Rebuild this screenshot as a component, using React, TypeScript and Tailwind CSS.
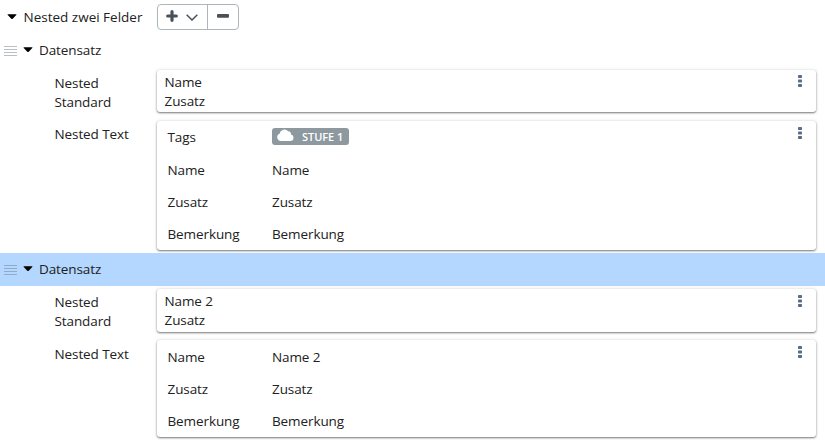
import type { ReactNode } from "react";

type Field = { label: string; value: ReactNode };

function Caret() {
  return (
    <svg className="h-[6px] w-[10px] shrink-0" viewBox="0 0 10 6" fill="#000">
      <path d="M1 0.3h8q.9 0 .3.8L5.7 4.8q-.7.6-1.4 0L.7 1.1Q.1.3 1 .3z" />
    </svg>
  );
}

function Grip() {
  return (
    <span className="flex w-[13px] flex-col gap-[2px]">
      <span className="h-px bg-[#708090]/50" />
      <span className="h-px bg-[#708090]/50" />
      <span className="h-px bg-[#708090]/50" />
      <span className="h-px bg-[#708090]/50" />
    </span>
  );
}

function MenuDots({ className }: { className: string }) {
  return (
    <svg className={`mr-[14px] h-[12px] w-[4px] shrink-0 ${className}`} viewBox="0 0 4 12" fill="#596d84">
      <rect x="0" y="0" width="4" height="3" rx="0.7" />
      <rect x="0" y="4.5" width="4" height="3" rx="0.7" />
      <rect x="0" y="9" width="4" height="3" rx="0.7" />
    </svg>
  );
}

function Card({ className, dots = "mt-[6px]", children }: { className: string; dots?: string; children: ReactNode }) {
  return (
    <div
      className={`flex w-[659px] shrink-0 items-start justify-between rounded-[3px] bg-white shadow-[0_1px_2px_rgba(0,0,0,0.5),0_0_4px_rgba(0,0,0,0.1)] ${className}`}
    >
      {children}
      <MenuDots className={dots} />
    </div>
  );
}

function Row({ label, className, labelPad = "pt-1", children }: { label: string; className: string; labelPad?: string; children: ReactNode }) {
  return (
    <div className={`flex items-start ${className}`}>
      <div className={`w-[102.5px] shrink-0 ${labelPad}`}>
        <div className="w-20">{label}</div>
      </div>
      {children}
    </div>
  );
}

function Fields({ items }: { items: Field[] }) {
  return (
    <div className="pt-px pl-[10.5px]">
      {items.map((item) => (
        <div key={item.label} className="flex h-8 items-center">
          <span className="w-[104.5px]">{item.label}</span>
          <span>{item.value}</span>
        </div>
      ))}
    </div>
  );
}

function Tag() {
  return (
    <span className="flex h-[17px] w-[77px] items-center rounded-[3px] bg-[#8d999f] pl-[5px] text-[11px] leading-[17px] font-semibold text-white">
      <svg className="mb-[3px] h-[12px] w-[17px]" viewBox="0 0 17 12" fill="#fff">
        <path d="M3.8 12A3.8 3.8 0 0 1 2.5 4.7 5 5 0 0 1 11.2 2.3 2.8 2.8 0 0 1 14 5.5 3.3 3.3 0 0 1 13.5 12z" />
      </svg>
      <span className="ml-[8px] tracking-[-0.05px]">STUFE 1</span>
    </span>
  );
}

function RecordHeader({ selected }: { selected?: boolean }) {
  return (
    <div className={`flex h-[33px] items-center pl-1 ${selected ? "bg-[#b3d7ff]" : ""}`}>
      <Grip />
      <span className="mr-[6px] mb-px ml-[6px] flex">
        <Caret />
      </span>
      <span>Datensatz</span>
    </div>
  );
}

export default function App() {
  return (
    <main className="h-[444px] w-[825px] overflow-hidden bg-white font-['Open_Sans','Noto_Sans',sans-serif] text-[13.5px] leading-[19px] tracking-[-0.1px] text-[#212121]">
      <header className="flex h-[34px] items-center pl-[7px]">
        <Caret />
        <span className="ml-[6.5px] w-[133.5px] tracking-normal">Nested zwei Felder</span>
        <div className="flex h-[26px] w-[82px] rounded-[4px] border border-[#adb5bd]">
          <button className="flex w-[50px] items-center border-r border-[#adb5bd] pl-[8px]">
            <svg className="mb-[3px] h-[12px] w-[12px]" viewBox="0 0 12 12" fill="none" stroke="#495057" strokeWidth="3.2" strokeLinecap="round">
              <path d="M6 1.7v8.6M1.7 6h8.6" />
            </svg>
            <svg className="ml-[8px] h-[7px] w-[12px]" viewBox="0 0 12 7" fill="none" stroke="#495057" strokeWidth="1.5">
              <path d="M.7.8 6 6 11.3.8" />
            </svg>
          </button>
          <button className="flex flex-1 items-center justify-center">
            <svg className="mb-[3px] h-[4px] w-[12px]" viewBox="0 0 12 4" fill="#495057">
              <rect width="12" height="3.7" rx="1" />
            </svg>
          </button>
        </div>
      </header>

      <RecordHeader />
      <section className="h-[186px] pt-[3px] pl-[54.5px]">
        <Row label="Nested Standard" className="h-[51px]">
          <Card className="h-[42px]" dots="mt-[5px]">
            <div className="pt-[3px] pl-[7.5px]">
              <p>Name</p>
              <p>Zusatz</p>
            </div>
          </Card>
        </Row>
        <Row label="Nested Text" className="h-[129px]">
          <Card className="h-[129px]">
            <div className="pl-[10.5px]">
              <div className="flex h-[33px] items-start">
                <span className="w-[104.5px] pt-[7px]">Tags</span>
                <span className="pt-[7px]">
                  <Tag />
                </span>
              </div>
              <div className="-mt-px -ml-[10.5px]">
                <Fields
                  items={[
                    { label: "Name", value: "Name" },
                    { label: "Zusatz", value: "Zusatz" },
                    { label: "Bemerkung", value: "Bemerkung" },
                  ]}
                />
              </div>
            </div>
          </Card>
        </Row>
      </section>

      <RecordHeader selected />
      <section className="pt-[3px] pl-[54.5px]">
        <Row label="Nested Standard" className="h-[51px]">
          <Card className="h-[43px]">
            <div className="pt-[3px] pl-[7.5px]">
              <p>Name 2</p>
              <p>Zusatz</p>
            </div>
          </Card>
        </Row>
        <Row label="Nested Text" className="h-[97px]" labelPad="pt-[5px]">
          <Card className="h-[97px]">
            <Fields
              items={[
                { label: "Name", value: "Name 2" },
                { label: "Zusatz", value: "Zusatz" },
                { label: "Bemerkung", value: "Bemerkung" },
              ]}
            />
          </Card>
        </Row>
      </section>
    </main>
  );
}
